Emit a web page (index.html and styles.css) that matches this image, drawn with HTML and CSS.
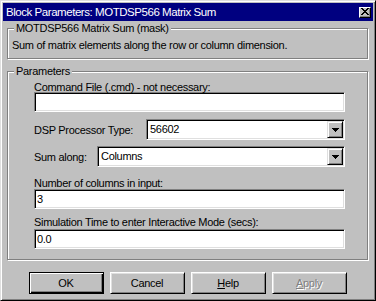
FILE: index.html
```html
<!DOCTYPE html>
<html>
<head>
<meta charset="utf-8">
<link rel="stylesheet" href="styles.css">
</head>
<body>
<div class="window">
  <div class="titlebar">
    <span class="title">Block Parameters: MOTDSP566 Matrix Sum</span>
    <span class="close"><svg width="8" height="7" viewBox="0 0 8 7" shape-rendering="crispEdges"><path d="M0 0h2v1H0zM6 0h2v1H6zM1 1h2v1H1zM5 1h2v1H5zM2 2h4v1H2zM3 3h2v1H3zM2 4h4v1H2zM1 5h2v1H1zM5 5h2v1H5zM0 6h2v1H0zM6 6h2v1H6z" fill="#000"/></svg></span>
  </div>
  <div class="content">
    <div class="group g1">
      <span class="legend">MOTDSP566 Matrix Sum (mask)</span>
      <p class="desc">Sum of matrix elements along the row or column dimension.</p>
    </div>
    <div class="group g2">
      <span class="legend">Parameters</span>
      <div class="field f1">
        <div class="label">Command File (.cmd) - not necessary:</div>
        <div class="edit"></div>
      </div>
      <div class="row r1">
        <div class="label">DSP Processor Type:</div>
        <div class="combo c1"><span class="value">56602</span><span class="drop"><svg width="7" height="4" viewBox="0 0 7 4" shape-rendering="crispEdges"><path d="M0 0h7v1H0zM1 1h5v1H1zM2 2h3v1H2zM3 3h1v1H3z" fill="#000"/></svg></span></div>
      </div>
      <div class="row r2">
        <div class="label">Sum along:</div>
        <div class="combo c2"><span class="value">Columns</span><span class="drop"><svg width="7" height="4" viewBox="0 0 7 4" shape-rendering="crispEdges"><path d="M0 0h7v1H0zM1 1h5v1H1zM2 2h3v1H2zM3 3h1v1H3z" fill="#000"/></svg></span></div>
      </div>
      <div class="field f3">
        <div class="label">Number of columns in input:</div>
        <div class="edit">3</div>
      </div>
      <div class="field f4">
        <div class="label">Simulation Time to enter Interactive Mode (secs):</div>
        <div class="edit">0.0</div>
      </div>
    </div>
    <div class="buttons">
      <div class="btn default">OK</div>
      <div class="btn">Cancel</div>
      <div class="btn"><u>H</u>elp</div>
      <div class="btn disabled"><u>A</u>pply</div>
    </div>
  </div>
</div>
</body>
</html>
```

FILE: styles.css
```css
html, body {
  margin: 0;
  padding: 0;
  background: #c0c0c0;
}

.window {
  width: 376px;
  height: 301px;
  box-sizing: border-box;
  border: 1px solid;
  border-color: #dfdfdf #000 #000 #dfdfdf;
  box-shadow: inset 1px 1px 0 #fff, inset -1px -1px 0 #808080;
  padding: 2px;
  background: #c0c0c0;
  display: flex;
  flex-direction: column;
  font-family: "Liberation Sans", Arial, sans-serif;
  font-size: 11px;
  letter-spacing: -0.3px;
  color: #000;
}

.titlebar {
  height: 18px;
  background: #000080;
  color: #fff;
  display: flex;
  align-items: center;
  justify-content: space-between;
  padding: 0 2px 0 3px;
  font-size: 11.5px;
  letter-spacing: -0.45px;
  line-height: 18px;
}

.close {
  width: 12px;
  height: 11px;
  box-sizing: border-box;
  background: #c0c0c0;
  border: 1px solid;
  border-color: #fff #000 #000 #fff;
  box-shadow: inset -1px -1px 0 #808080;
  display: flex;
  align-items: center;
  justify-content: center;
  padding: 0 1px 1px 0;
}

.close svg { display: block; }

.content {
  display: flex;
  flex-direction: column;
  padding: 0 5px 0 4px;
}

.group {
  position: relative;
  border: 1px solid #808080;
  box-shadow: 1px 1px 0 #fff, inset 1px 1px 0 #fff;
}

.legend {
  position: absolute;
  top: -7px;
  left: 6px;
  padding: 0 2px;
  background: #c0c0c0;
  line-height: 13px;
  white-space: nowrap;
}

.g1 {
  margin-top: 7px;
  padding: 10px 4px 6px;
}

.desc {
  margin: 0;
  line-height: 13px;
  white-space: nowrap;
}

.g2 {
  margin-top: 12px;
  padding: 9px 22px 10px 26px;
}

.label {
  line-height: 12px;
  height: 11px;
  white-space: nowrap;
}

.edit {
  height: 20px;
  box-sizing: border-box;
  background: #fff;
  border: 1px solid;
  border-color: #808080 #fff #fff #808080;
  box-shadow: inset 1px 1px 0 #000, inset -1px -1px 0 #dfdfdf;
  padding: 0 2px 0 2px;
  line-height: 18px;
}

.f3 { margin-top: 10px; }
.f3 .edit { margin-top: 1px; }
.f4 { margin-top: 7px; }
.f4 .edit { margin-top: 2px; }

.row {
  display: flex;
  align-items: center;
}

.r1 { margin-top: 7px; }
.r2 { margin-top: 6px; }

.r1 .label { width: 112px; flex: none; }
.r2 .label { width: 63px; flex: none; }

.combo {
  flex: 1;
  height: 21px;
  box-sizing: border-box;
  background: #fff;
  border: 1px solid;
  border-color: #808080 #fff #fff #808080;
  box-shadow: inset 1px 1px 0 #000, inset -1px -1px 0 #dfdfdf;
  display: flex;
  align-items: center;
  padding: 1px 1px 1px 3px;
}

.value {
  flex: 1;
  line-height: 17px;
}

.drop {
  width: 16px;
  height: 17px;
  box-sizing: border-box;
  background: #c0c0c0;
  border: 1px solid;
  border-color: #dfdfdf #000 #000 #dfdfdf;
  box-shadow: inset 1px 1px 0 #fff, inset -1px -1px 0 #808080;
  display: flex;
  align-items: center;
  justify-content: center;
}

.drop svg { display: block; }

.buttons {
  margin-top: 12px;
  display: flex;
  justify-content: center;
  gap: 6px;
}

.btn {
  width: 75px;
  height: 22px;
  box-sizing: border-box;
  border: 1px solid;
  border-color: #fff #000 #000 #fff;
  box-shadow: inset 1px 1px 0 #dfdfdf, inset -1px -1px 0 #808080;
  display: flex;
  align-items: center;
  justify-content: center;
  line-height: 14px;
}

.btn.default {
  border-color: #000;
  box-shadow: inset 1px 1px 0 #fff, inset -1px -1px 0 #000, inset -2px -2px 0 #808080;
}

.btn.disabled {
  color: #808080;
  text-shadow: 1px 1px 0 #fff;
}

.btn u {
  text-decoration: underline;
  text-underline-offset: 1px;
}
```
